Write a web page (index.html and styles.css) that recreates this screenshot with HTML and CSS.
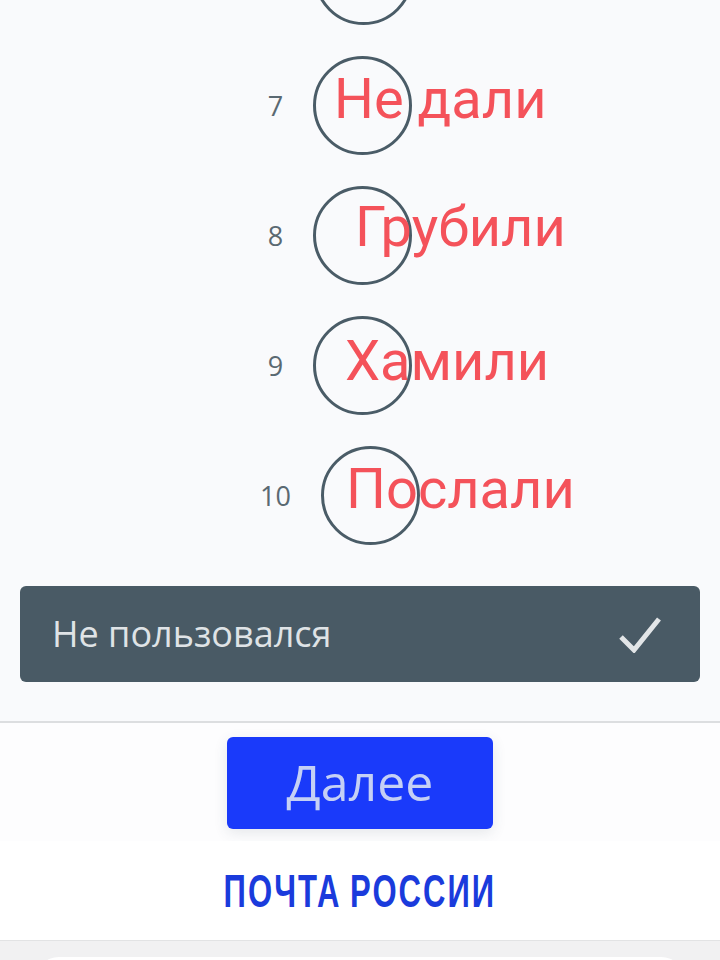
FILE: index.html
```html
<!DOCTYPE html>
<html lang="ru">
<head>
<meta charset="utf-8">
<title>Опрос</title>
<link rel="stylesheet" href="styles.css">
</head>
<body>
<main class="survey">
  <div class="scale">
    <div class="row"><span class="num num-blank"></span><span class="circle"></span></div>
    <div class="row"><span class="num">7</span><span class="circle"></span><span class="note note-7">Не дали</span></div>
    <div class="row"><span class="num">8</span><span class="circle"></span><span class="note note-8">Грубили</span></div>
    <div class="row"><span class="num">9</span><span class="circle"></span><span class="note note-9">Хамили</span></div>
    <div class="row"><span class="num">10</span><span class="circle"></span><span class="note note-10">Послали</span></div>
  </div>
  <div class="option">
    <span>Не пользовался</span>
    <svg class="check" viewBox="0 0 42 36" aria-hidden="true"><path d="M2 20 L15 33 L40 2"/></svg>
  </div>
</main>
<div class="action">
  <button class="next" type="button">Далее</button>
</div>
<div class="brand"><span class="logo">ПОЧТА РОССИИ</span></div>
<div class="tray"><div class="sheet"></div></div>
</body>
</html>
```
FILE: styles.css
```css
* { box-sizing: border-box; }
html, body { margin: 0; height: 960px; overflow: hidden; }
body {
  width: 720px;
  background: #f9fafc;
  font-family: "Noto Sans", "Open Sans", sans-serif;
  display: flex;
  flex-direction: column;
}
.survey {
  height: 723px;
  flex: none;
  overflow: hidden;
  padding: 0 20px;
  border-bottom: 2px solid #dcdee0;
}
.scale { margin-top: -90px; }
.row {
  position: relative;
  height: 130px;
  display: flex;
  align-items: center;
  justify-content: center;
  gap: 30px;
  padding-right: 40px;
}
.num {
  font-family: "Open Sans", sans-serif;
  font-size: 27px;
  color: #5a6972;
  line-height: 1;
}
.num-blank { width: 16px; height: 27px; }
.circle {
  width: 99px;
  height: 99px;
  border: 3px solid #4a5c67;
  border-radius: 50%;
  flex: none;
}
.note {
  position: absolute;
  font-family: Roboto, sans-serif;
  font-size: 56px;
  line-height: 1;
  color: #f4525a;
  white-space: nowrap;
}
.note-7 { left: 314px; top: 31px; }
.note-8 { left: 335px; top: 29px; }
.note-9 { left: 325px; top: 33px; }
.note-10 { left: 326px; top: 31px; }
.option {
  height: 96px;
  margin-top: 26px;
  padding: 0 39px 2px 32px;
  background: #495a65;
  border-radius: 6px;
  display: flex;
  align-items: center;
  justify-content: space-between;
  color: #dfe3e6;
  font-family: "Open Sans", sans-serif;
  font-size: 36px;
}
.check { width: 42px; height: 36px; margin-top: 4px; }
.check path { fill: none; stroke: #e2e5e7; stroke-width: 5; }
.action {
  height: 118px;
  flex: none;
  background: #fdfdfe;
  display: flex;
  justify-content: center;
  padding-top: 14px;
}
.next {
  width: 266px;
  height: 92px;
  border: 0;
  border-radius: 6px;
  background: #1a3afa;
  color: #c5d0f5;
  font-family: "Open Sans", sans-serif;
  font-size: 50px;
  padding: 0 0 2px;
  box-shadow: 0 4px 14px rgba(60, 70, 90, 0.12);
}
.brand {
  height: 100px;
  flex: none;
  background: #fff;
  border-bottom: 1px solid #e2e3e4;
  display: flex;
  align-items: center;
  justify-content: center;
}
.logo {
  font-family: "Liberation Sans", sans-serif;
  font-weight: 700;
  font-size: 46px;
  letter-spacing: 3px;
  word-spacing: -3px;
  color: #1a3bdc;
  line-height: 1;
  white-space: nowrap;
  transform: scaleX(0.675);
}
.tray {
  flex: 1;
  background: #f1f1f2;
  padding: 16px 35px 0;
}
.sheet {
  height: 40px;
  background: #fff;
  border-radius: 24px 24px 0 0;
}
```
